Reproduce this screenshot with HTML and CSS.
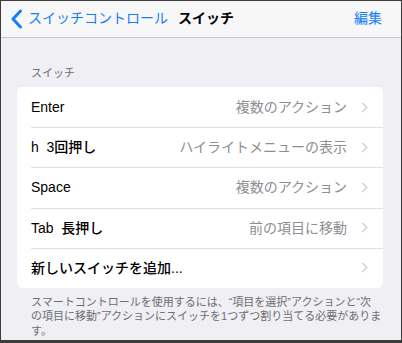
FILE: index.html
```html
<!DOCTYPE html>
<html lang="ja">
<head>
  <meta charset="UTF-8">
  <meta name="viewport" content="width=device-width, initial-scale=1.0">
  <title>スイッチ</title>
  <link rel="stylesheet" href="styles.css">
</head>
<body>
  <div class="screen">
    <div class="navbar">
      <a class="back" href="#">
        <svg class="back-icon" width="13" height="20" viewBox="0 0 13 20">
          <path d="M10.5 2 L3 10 L10.5 18" fill="none" stroke="#147efb" stroke-width="3" stroke-linecap="round" stroke-linejoin="round"/>
        </svg>
        <span>スイッチコントロール</span>
      </a>
      <div class="title">スイッチ</div>
      <a class="edit" href="#">編集</a>
    </div>

    <div class="content">
      <div class="section-header">スイッチ</div>

      <div class="card">
        <div class="row">
          <span class="label">Enter</span>
          <span class="value">複数のアクション</span>
          <span class="chevron"></span>
        </div>
        <div class="row">
          <span class="label">h&nbsp; 3回押し</span>
          <span class="value">ハイライトメニューの表示</span>
          <span class="chevron"></span>
        </div>
        <div class="row">
          <span class="label">Space</span>
          <span class="value">複数のアクション</span>
          <span class="chevron"></span>
        </div>
        <div class="row">
          <span class="label">Tab&nbsp; 長押し</span>
          <span class="value">前の項目に移動</span>
          <span class="chevron"></span>
        </div>
        <div class="row">
          <span class="label">新しいスイッチを追加...</span>
          <span class="value"></span>
          <span class="chevron"></span>
        </div>
      </div>

      <div class="footer">
        <div class="footer-line">スマートコントロールを使用するには、“項目を選択”アクションと“次</div>
        <div class="footer-line">の項目に移動”アクションにスイッチを1つずつ割り当てる必要がありま</div>
        <div class="footer-line">す。</div>
      </div>
    </div>
  </div>
</body>
</html>
```

FILE: styles.css
```css
* {
  margin: 0;
  padding: 0;
  box-sizing: border-box;
}

body {
  font-family: "Liberation Sans", "Noto Sans CJK JP", sans-serif;
  background: #3c3c3c;
}

.screen {
  width: 402px;
  height: 343px;
  border: 1px solid #3c3c3c;
  border-bottom-width: 3px;
  background: #efeff4;
  overflow: hidden;
}

.navbar {
  height: 37px;
  background: #f7f7f8;
  border-bottom: 1px solid #c8c7cc;
  display: flex;
  align-items: center;
  padding: 0 19px 2px 9px;
  font-size: 14px;
  line-height: 18px;
}

.back {
  display: flex;
  align-items: center;
  color: #147efb;
  text-decoration: none;
}

.back-icon {
  margin-right: 5px;
  margin-top: 2px;
}

.title {
  margin-left: 10px;
  font-weight: bold;
  color: #000000;
}

.edit {
  margin-left: auto;
  color: #147efb;
  text-decoration: none;
}

.content {
  padding: 0 18px 0 16px;
}

.section-header {
  padding: 28px 0 0 14px;
  height: 49px;
  font-size: 11px;
  line-height: 14px;
  color: #6d6d72;
}

.card {
  background: #ffffff;
  border-radius: 5px;
}

.row {
  position: relative;
  height: 40.2px;
  display: flex;
  align-items: center;
  padding: 0 15px 0 14px;
  font-size: 14px;
  line-height: 18px;
}

.row + .row::before {
  content: "";
  position: absolute;
  top: 0;
  left: 14px;
  right: 0;
  border-top: 1px solid #e1e1e4;
}

.label {
  color: #000000;
  font-weight: 500;
}

.value {
  margin-left: auto;
  color: #8e8e93;
}

.chevron {
  width: 7px;
  height: 7px;
  margin-left: 12px;
  margin-right: 2px;
  border-top: 1.5px solid #c4c4c8;
  border-right: 1.5px solid #c4c4c8;
  transform: rotate(45deg);
}

.footer {
  padding: 7px 0 0 14px;
  font-size: 11px;
  line-height: 14.5px;
  color: #6d6d72;
  white-space: nowrap;
}
```
